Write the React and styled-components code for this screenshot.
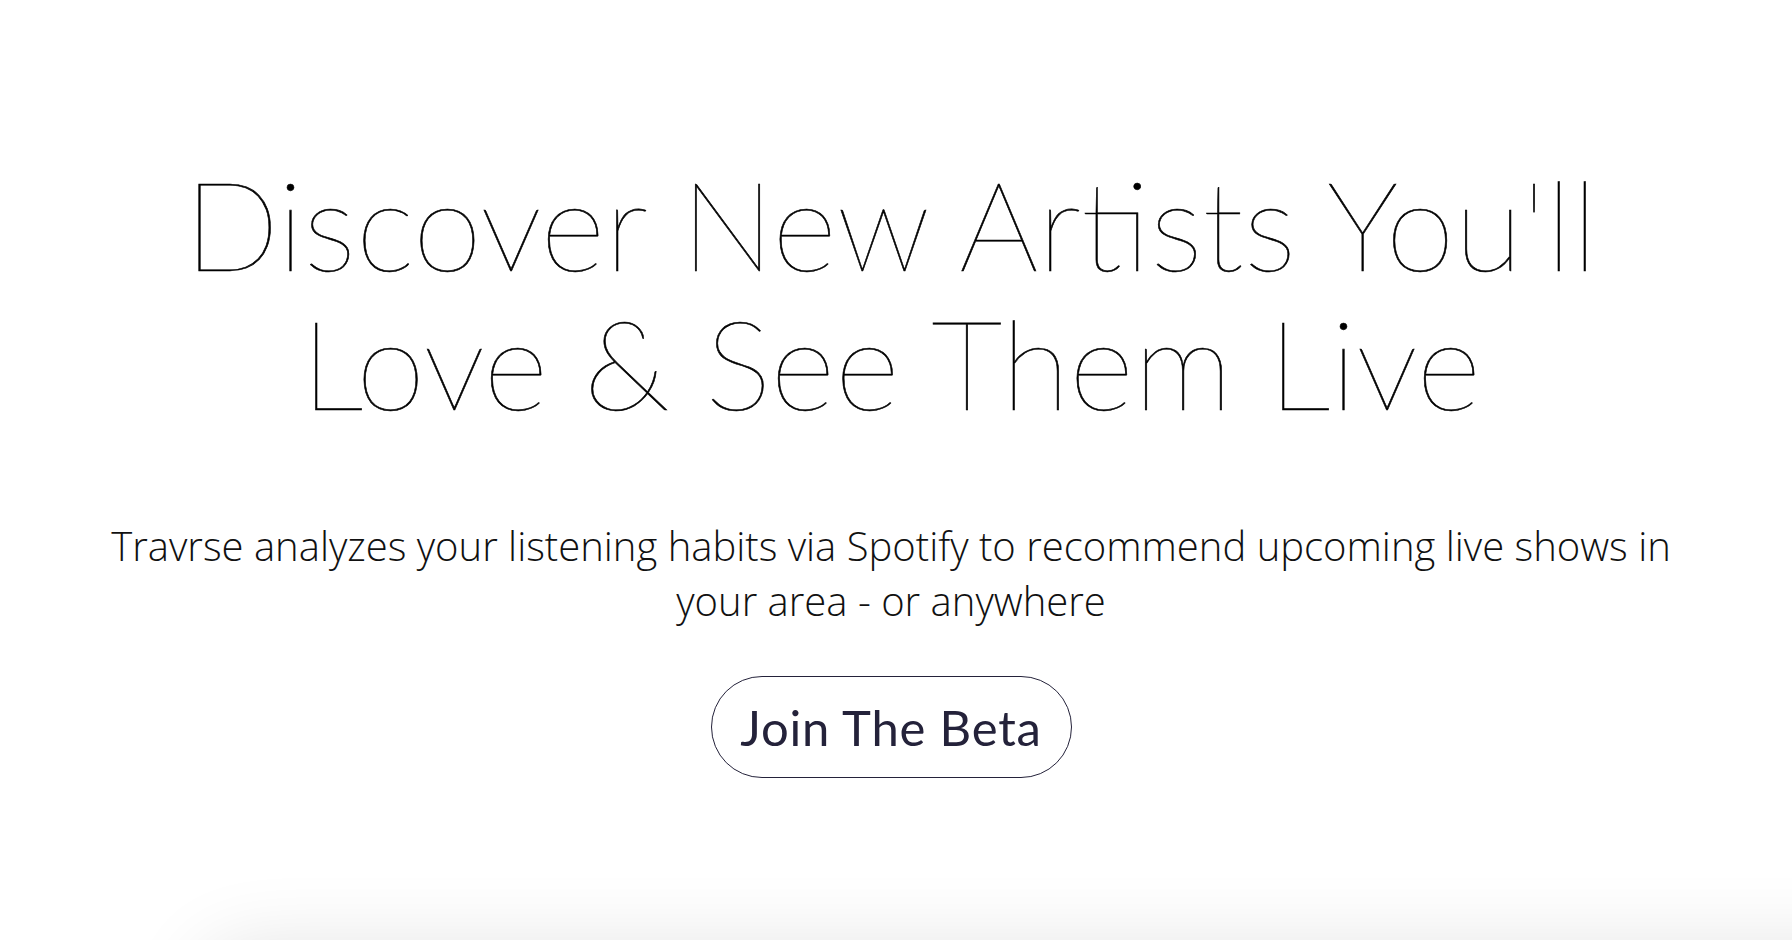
import React from "react";
import styled, {createGlobalStyle} from "styled-components";

const GlobalStyle = createGlobalStyle`
  html, body {
    margin: 0;
    padding: 0;
    background: #ffffff;
  }
  body {
    overflow: hidden;
  }
`;

const App = () => {
  return (
    <Page>
      <GlobalStyle />
      <Hero>
        <Title>
          Discover New Artists You'll
          <br />
          Love &amp; See Them Live
        </Title>
        <Blurb>
          Travrse analyzes your listening habits via Spotify to recommend upcoming live shows in
          <br />
          your area - or anywhere
        </Blurb>
        <BetaButton type="button">Join The Beta</BetaButton>
      </Hero>
      <NextSection />
    </Page>
  );
};

const Page = styled.div`
  width: 100%;
  height: 100vh;
  overflow: hidden;
  display: flex;
  flex-direction: column;
`;

// centre sits a few px left of the window middle, as if a scrollbar took the edge
const Hero = styled.section`
  display: flex;
  flex-direction: column;
  align-items: center;
  padding: 154px 10px 0 0;
  text-align: center;
`;

const Title = styled.h1`
  margin: 0;
  font-family: "Lato", "Liberation Sans", sans-serif;
  font-weight: 200;
  font-size: 125px;
  line-height: 139px;
  color: #000000;
  -webkit-text-stroke: 0.6px #000000;
`;

const Blurb = styled.p`
  margin: 86px 0 0;
  font-family: "Open Sans", "Liberation Sans", sans-serif;
  font-weight: 300;
  font-size: 40px;
  line-height: 55px;
  color: #111111;
`;

const BetaButton = styled.button`
  margin-top: 48px;
  width: 361px;
  height: 102px;
  border: 1.5px solid #24223a;
  border-radius: 51px;
  background: #ffffff;
  font-family: "Lato", "Liberation Sans", sans-serif;
  font-weight: 400;
  font-size: 49px;
  letter-spacing: 0.8px;
  color: #24223a;
  cursor: pointer;
`;

const NextSection = styled.section`
  flex-shrink: 0;
  margin: 170px -120px 0 200px;
  height: 400px;
  border-radius: 48px;
  background: #ffffff;
  box-shadow: 0 0 80px rgba(0, 0, 0, 0.12);
`;

export default App;
